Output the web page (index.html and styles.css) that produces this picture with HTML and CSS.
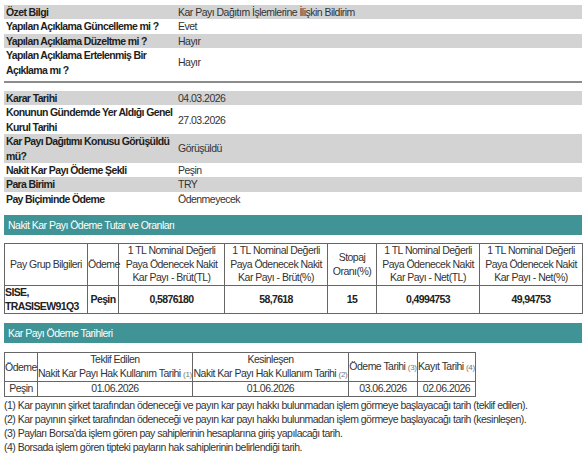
FILE: index.html
```html
<!DOCTYPE html>
<html lang="tr">
<head>
<meta charset="utf-8">
<title>Kar Payı Dağıtım İşlemlerine İlişkin Bildirim</title>
<link rel="stylesheet" href="styles.css">
</head>
<body>
<div class="page">
  <table class="info">
    <colgroup><col class="c-label"><col></colgroup>
    <tr class="shade"><td class="label">Özet Bilgi</td><td class="value">Kar Payı Dağıtım İşlemlerine İlişkin Bildirim</td></tr>
    <tr><td class="label">Yapılan Açıklama Güncelleme mi ?</td><td class="value">Evet</td></tr>
    <tr class="shade"><td class="label">Yapılan Açıklama Düzeltme mi ?</td><td class="value">Hayır</td></tr>
    <tr><td class="label">Yapılan Açıklama Ertelenmiş Bir Açıklama mı ?</td><td class="value">Hayır</td></tr>
  </table>
  <div class="sep"></div>
  <table class="info">
    <colgroup><col class="c-label"><col></colgroup>
    <tr class="shade"><td class="label">Karar Tarihi</td><td class="value">04.03.2026</td></tr>
    <tr><td class="label">Konunun Gündemde Yer Aldığı Genel Kurul Tarihi</td><td class="value">27.03.2026</td></tr>
    <tr class="shade"><td class="label">Kar Payı Dağıtımı Konusu Görüşüldü mü?</td><td class="value">Görüşüldü</td></tr>
    <tr><td class="label">Nakit Kar Payı Ödeme Şekli</td><td class="value">Peşin</td></tr>
    <tr class="shade"><td class="label">Para Birimi</td><td class="value">TRY</td></tr>
    <tr><td class="label">Pay Biçiminde Ödeme</td><td class="value">Ödenmeyecek</td></tr>
  </table>

  <div class="section-title s1">Nakit Kar Payı Ödeme Tutar ve Oranları</div>
  <table class="grid amounts">
    <colgroup>
      <col class="w83"><col class="w31"><col class="w106"><col class="w103"><col class="w49"><col class="w103"><col class="w103">
    </colgroup>
    <tr class="head">
      <th>Pay Grup Bilgileri</th>
      <th>Ödeme</th>
      <th>1 TL Nominal Değerli Paya Ödenecek Nakit Kar Payı - Brüt(TL)</th>
      <th>1 TL Nominal Değerli Paya Ödenecek Nakit Kar Payı - Brüt(%)</th>
      <th>Stopaj Oranı(%)</th>
      <th>1 TL Nominal Değerli Paya Ödenecek Nakit Kar Payı - Net(TL)</th>
      <th>1 TL Nominal Değerli Paya Ödenecek Nakit Kar Payı - Net(%)</th>
    </tr>
    <tr class="data">
      <td class="left">SISE,<br>TRASISEW91Q3</td>
      <td>Peşin</td>
      <td>0,5876180</td>
      <td>58,7618</td>
      <td>15</td>
      <td>0,4994753</td>
      <td>49,94753</td>
    </tr>
  </table>

  <div class="section-title s2">Kar Payı Ödeme Tarihleri</div>
  <table class="grid dates">
    <colgroup>
      <col class="w33"><col class="w155"><col class="w156"><col class="w69"><col class="w58">
    </colgroup>
    <tr class="head">
      <th class="left">Ödeme</th>
      <th>Teklif Edilen<br>Nakit Kar Payı Hak Kullanım Tarihi <span class="ref">(1)</span></th>
      <th>Kesinleşen<br>Nakit Kar Payı Hak Kullanım Tarihi <span class="ref">(2)</span></th>
      <th>Ödeme Tarihi <span class="ref">(3)</span></th>
      <th>Kayıt Tarihi <span class="ref">(4)</span></th>
    </tr>
    <tr class="data">
      <td>Peşin</td>
      <td>01.06.2026</td>
      <td>01.06.2026</td>
      <td>03.06.2026</td>
      <td>02.06.2026</td>
    </tr>
  </table>

  <div class="notes">
    <p>(1) Kar payının şirket tarafından ödeneceği ve payın kar payı hakkı bulunmadan işlem görmeye başlayacağı tarih (teklif edilen).</p>
    <p>(2) Kar payının şirket tarafından ödeneceği ve payın kar payı hakkı bulunmadan işlem görmeye başlayacağı tarih (kesinleşen).</p>
    <p>(3) Payları Borsa'da işlem gören pay sahiplerinin hesaplarına giriş yapılacağı tarih.</p>
    <p>(4) Borsada işlem gören tipteki payların hak sahiplerinin belirlendiği tarih.</p>
  </div>
</div>
</body>
</html>
```

FILE: styles.css
```css
html, body {
  margin: 0;
  padding: 0;
  background: #ffffff;
}

body {
  font-family: "Liberation Sans", Arial, sans-serif;
  font-size: 10.5px;
  letter-spacing: -0.52px;
  color: #222222;
}

.page {
  width: 578px;
  padding: 5px 0 0 4px;
}

.info {
  width: 578px;
  border-collapse: collapse;
  table-layout: fixed;
}

.info .c-label {
  width: 174px;
}

.info td {
  padding: 0 2px;
  line-height: 14.4px;
  vertical-align: middle;
}

.info td.label {
  font-weight: bold;
  letter-spacing: -0.62px;
  color: #1e1e1e;
}

.info td.value {
  padding-left: 0;
  color: #333333;
}

.info tr.shade td {
  background: #d3d3d3;
}

.sep {
  height: 2px;
  background: #8c8c8c;
  margin: 4px 0 8px 0;
}

.section-title {
  background: #409496;
  color: #ffffff;
  height: 20px;
  line-height: 20px;
  padding-left: 4px;
}

.section-title.s1 {
  margin-top: 9px;
  margin-bottom: 8px;
}

.section-title.s2 {
  margin-top: 9px;
  margin-bottom: 9px;
}

.grid {
  border-collapse: collapse;
  table-layout: fixed;
  color: #333333;
}

.grid th,
.grid td {
  border: 1px solid #666666;
  padding: 0;
  text-align: center;
  vertical-align: middle;
  line-height: 13.6px;
}

.grid th {
  font-weight: normal;
}

.grid .left {
  text-align: left;
}

.amounts {
  width: 579px;
}

.amounts .data td {
  font-weight: bold;
  letter-spacing: -0.62px;
  color: #222222;
}

.ref {
  font-size: 8px;
  letter-spacing: -0.3px;
  color: #777777;
}

.w83 { width: 83px; }
.w31 { width: 31px; }
.w106 { width: 106px; }
.w103 { width: 103px; }
.w49 { width: 49px; }
.w33 { width: 33px; }
.w155 { width: 155px; }
.w156 { width: 156px; }
.w69 { width: 69px; }
.w58 { width: 58px; }

.notes {
  margin-top: 1px;
  color: #333333;
}

.notes p {
  margin: 0;
  line-height: 14px;
}
```
